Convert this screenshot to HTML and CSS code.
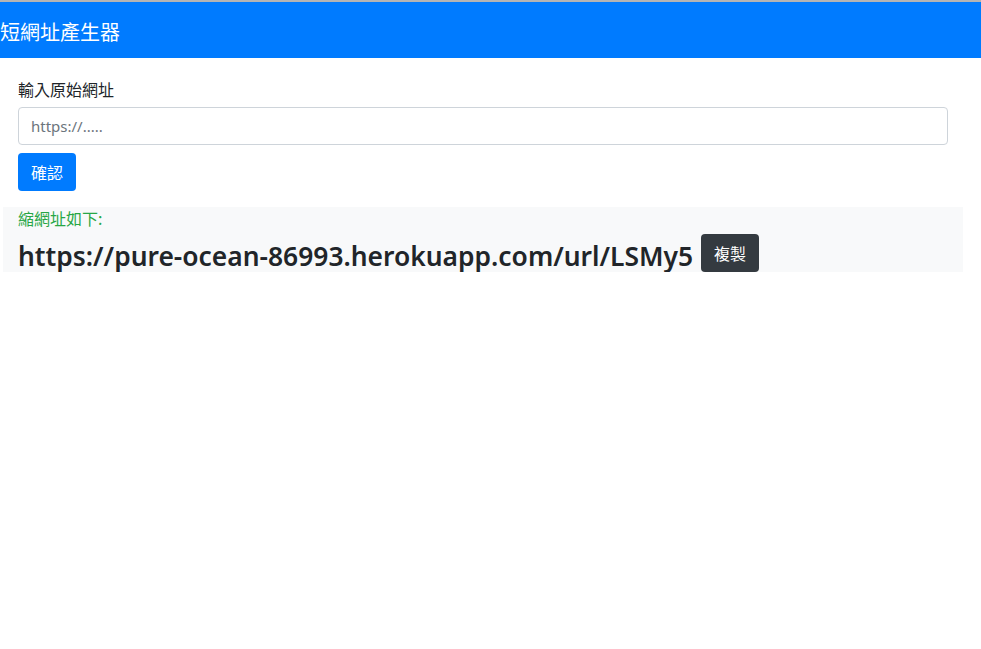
FILE: index.html
```html
<!DOCTYPE html>
<html lang="zh-Hant">
<head>
<meta charset="utf-8">
<title>短網址產生器</title>
<link rel="stylesheet" href="styles.css">
</head>
<body>
<nav class="navbar"><span class="brand">短網址產生器</span></nav>
<main class="container">
  <form class="form">
    <label class="label" for="url">輸入原始網址</label>
    <input class="input" id="url" type="text" placeholder="https://.....">
    <button class="btn btn-primary" type="button">確認</button>
  </form>
  <section class="result">
    <p class="result-label">縮網址如下:</p>
    <div class="result-row">
      <h2 class="short-url">https://pure-ocean-86993.herokuapp.com/url/LSMy5</h2>
      <button class="btn btn-dark" type="button">複製</button>
    </div>
  </section>
</main>
</body>
</html>
```
FILE: styles.css
```css
html, body {
  margin: 0;
  padding: 0;
  background: #fff;
}
body {
  font-family: "Noto Sans", "Noto Sans CJK TC", sans-serif;
  font-size: 16px;
  color: #212529;
  border-top: 2px solid #b4b4b4;
}
.navbar {
  background: #007bff;
  height: 56px;
  display: flex;
  align-items: center;
  padding-top: 3px;
  box-sizing: border-box;
}
.brand {
  color: #fff;
  font-size: 20px;
  font-family: "Noto Sans CJK TC", sans-serif;
}
.container {
  width: 960px;
  margin-left: 3px;
}
.form {
  padding: 19px 15px 16px;
  display: flex;
  flex-direction: column;
  align-items: flex-start;
}
.label {
  font-family: "Noto Sans CJK TC", sans-serif;
  font-size: 16px;
  line-height: 24px;
  margin-bottom: 6px;
}
.input {
  box-sizing: border-box;
  width: 930px;
  height: 38px;
  border: 1px solid #ced4da;
  border-radius: 4px;
  padding: 6px 12px;
  font-family: "Noto Sans", sans-serif;
  font-size: 15px;
  color: #495057;
  margin: 0 0 8px;
}
.input::placeholder {
  color: #6c757d;
}
.btn {
  box-sizing: border-box;
  height: 38px;
  border: none;
  border-radius: 4px;
  padding: 0;
  color: #fff;
  font-family: "Noto Sans CJK TC", sans-serif;
  font-size: 16px;
  cursor: pointer;
}
.btn-primary {
  background: #007bff;
  width: 58px;
}
.btn-dark {
  background: #343a40;
  width: 58px;
}
.result {
  background: #f8f9fa;
  padding: 0 15px;
  height: 65px;
}
.result-label {
  margin: 0;
  color: #28a745;
  font-family: "Noto Sans CJK TC", sans-serif;
  font-size: 16px;
  line-height: 22px;
}
.result-row {
  display: flex;
  align-items: flex-end;
  gap: 8px;
  margin-top: 5px;
}
.short-url {
  margin: 0;
  font-family: "Noto Sans", sans-serif;
  font-size: 26.4px;
  font-weight: 600;
  line-height: 32px;
  color: #212529;
}
```
